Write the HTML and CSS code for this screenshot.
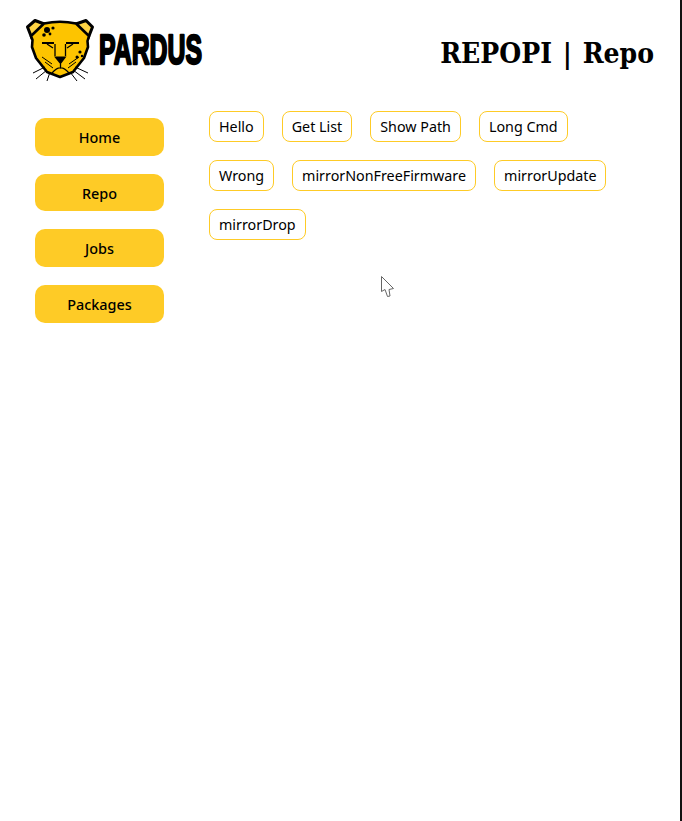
FILE: index.html
```html
<!DOCTYPE html>
<html lang="en">
<head>
<meta charset="utf-8">
<title>REPOPI | Repo</title>
<link rel="stylesheet" href="styles.css">
</head>
<body>
<div class="page">
  <header class="header">
    <svg class="logo" width="182" height="66" viewBox="25 17 182 66" aria-label="Pardus">
      <path class="ear" d="M27.5 27 L35 20.5 L47 25 L32 38.5 Z"/>
      <path class="ear" d="M92.5 27 L86 20.5 L73 25 L88 38.5 Z"/>
      <path class="face" d="M32.5 40 L31 36 L44 23.5 Q60 20 76 23.5 L89 36 L87.5 41 L88 47 L84 58 L73 72 L60 77 L47 72 L36 58 L32 47 Z"/>
      <path class="ink-fill" d="M54 56.5 H66.5 L60.5 64.5 Z"/>
      <path class="line" d="M60.5 64 V68 M52 73 Q57 67.5 60.5 68 Q64 67.5 69 73"/>
      <path class="brow" d="M42 43 H54 M66 43 H79"/>
      <path class="line" d="M55 44 V56 M65.5 44 V56 M47 44 L53 48 M73 44 L67 48"/>
      <path class="thin" d="M42 57 L52 64 M45 62 L53 68 M79 57 L69 64 M76 62 L68 68"/>
      <path class="thin" d="M45 67 L33 73 M47 70 L36 79 M50 72 L47 81 M75 67 L88 73 M73 70 L85 79 M70 72 L77 81"/>
      <circle class="ink-fill" cx="47" cy="30" r="3"/>
      <circle class="ink-fill" cx="53" cy="28" r="1.6"/>
      <circle class="ink-fill" cx="44" cy="35" r="1.8"/>
      <circle class="ink-fill" cx="50" cy="34" r="1.4"/>
      <circle class="ink-fill" cx="80" cy="52" r="1.6"/>
      <circle class="ink-fill" cx="77" cy="57" r="1.5"/>
      <circle class="ink-fill" cx="82" cy="56" r="1.2"/>
      <text class="wordmark" x="99" y="63.5" textLength="103" lengthAdjust="spacingAndGlyphs">PARDUS</text>
    </svg>
    <h1 class="title">REPOPI | Repo</h1>
  </header>
  <main class="content">
    <nav class="nav">
      <a class="nav-btn">Home</a>
      <a class="nav-btn">Repo</a>
      <a class="nav-btn">Jobs</a>
      <a class="nav-btn">Packages</a>
    </nav>
    <section class="tags">
      <button class="tag">Hello</button>
      <button class="tag">Get List</button>
      <button class="tag">Show Path</button>
      <button class="tag">Long Cmd</button>
      <button class="tag">Wrong</button>
      <button class="tag">mirrorNonFreeFirmware</button>
      <button class="tag">mirrorUpdate</button>
      <button class="tag">mirrorDrop</button>
    </section>
  </main>
  <svg class="cursor" width="16" height="24" viewBox="380 275 16 24">
    <path d="M381.5 276.5 V291.5 L385 289.5 L387.5 296.5 L390 296 L389 289.5 L393.5 288.5 Z"/>
  </svg>
</div>
</body>
</html>
```
FILE: styles.css
```css
html, body {
  margin: 0;
  padding: 0;
  background: #fff;
}
.page {
  position: relative;
  box-sizing: border-box;
  width: 682px;
  height: 821px;
  border-right: 2px solid #111;
  font-family: "Noto Sans", sans-serif;
  color: #000;
  overflow: hidden;
}
.header {
  display: flex;
  justify-content: space-between;
  align-items: flex-start;
  padding: 17px 26px 0 25px;
  height: 64px;
}
.logo { display: block; overflow: visible; }
.ear { fill: #fed344; stroke: #000; stroke-width: 3; stroke-linejoin: round; }
.face { fill: #fdc400; stroke: #000; stroke-width: 2.6; stroke-linejoin: round; }
.ink-fill { fill: #000; }
.brow { fill: none; stroke: #000; stroke-width: 2.2; }
.line { fill: none; stroke: #000; stroke-width: 1.3; }
.thin { fill: none; stroke: #000; stroke-width: 1; }
.wordmark {
  font-family: "Liberation Sans", sans-serif;
  font-weight: 700;
  font-size: 42px;
  fill: #000;
  stroke: #000;
  stroke-width: 2.4;
  stroke-linejoin: round;
}
.title {
  margin: 17px 0 0;
  font-family: "DejaVu Serif", serif;
  font-stretch: condensed;
  font-weight: 700;
  font-size: 28px;
  line-height: 40px;
  word-spacing: 2px;
  white-space: nowrap;
}
.content {
  display: flex;
  align-items: flex-start;
  margin-top: 30px;
  padding-left: 35px;
}
.nav {
  display: flex;
  flex-direction: column;
  gap: 18px;
  width: 129px;
  padding-top: 7px;
}
.nav-btn {
  display: block;
  height: 37.7px;
  line-height: 39.05px;
  text-align: center;
  background: #fecb26;
  border-radius: 10px;
  font-size: 14.4px;
  font-weight: 500;
}
.tags {
  display: flex;
  flex-wrap: wrap;
  gap: 18px;
  margin-left: 45px;
  width: 420px;
}
.tag {
  box-sizing: border-box;
  height: 31px;
  padding: 0 9px;
  background: #fff;
  border: 1px solid #fecb26;
  border-radius: 8px;
  color: #000;
  font-family: "Noto Sans", sans-serif;
  font-size: 14.3px;
}
.cursor {
  position: absolute;
  left: 380px;
  top: 275px;
}
.cursor path {
  fill: #fff;
  stroke: #666;
  stroke-width: 1;
}
```
